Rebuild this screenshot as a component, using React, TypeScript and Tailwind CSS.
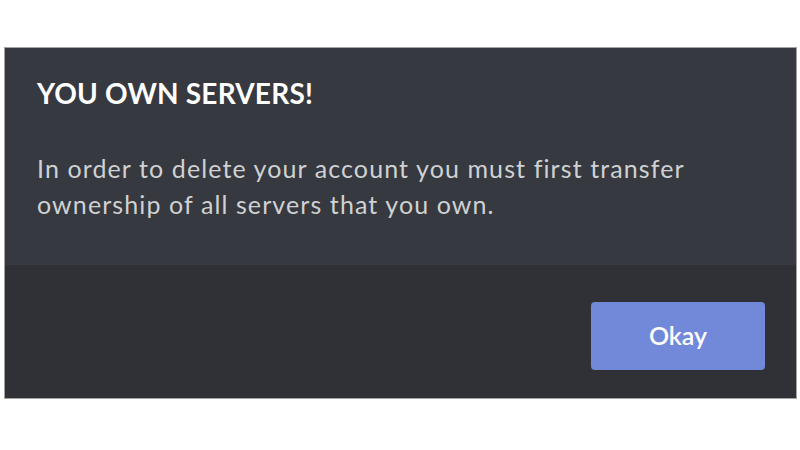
export default function App() {
  return (
    <div className="w-[800px] h-[450px] bg-white pt-[47px] pl-[4px]" style={{ fontFamily: 'Lato, "Open Sans", sans-serif' }}>
      <div className="w-[793px] border border-[#a3a3a3] flex flex-col">
        <div className="h-[217px] bg-[#36393f] pl-[32px] pt-[28px]">
          <h2 className="text-[28px] leading-[34px] font-bold text-white tracking-[0.2px]">YOU OWN SERVERS!</h2>
          <p className="mt-[40px] text-[25px] leading-[36px] tracking-[1.1px] text-[#d0d1d3]">
            In order to delete your account you must first transfer
            <br />
            ownership of all servers that you own.
          </p>
        </div>
        <div className="h-[133px] bg-[#2f3136] flex justify-end items-start pt-[37px] pr-[31px]">
          <button className="w-[174px] h-[68px] rounded-[4px] bg-[#7289da] text-white text-[25px] font-semibold">
            Okay
          </button>
        </div>
      </div>
    </div>
  );
}
